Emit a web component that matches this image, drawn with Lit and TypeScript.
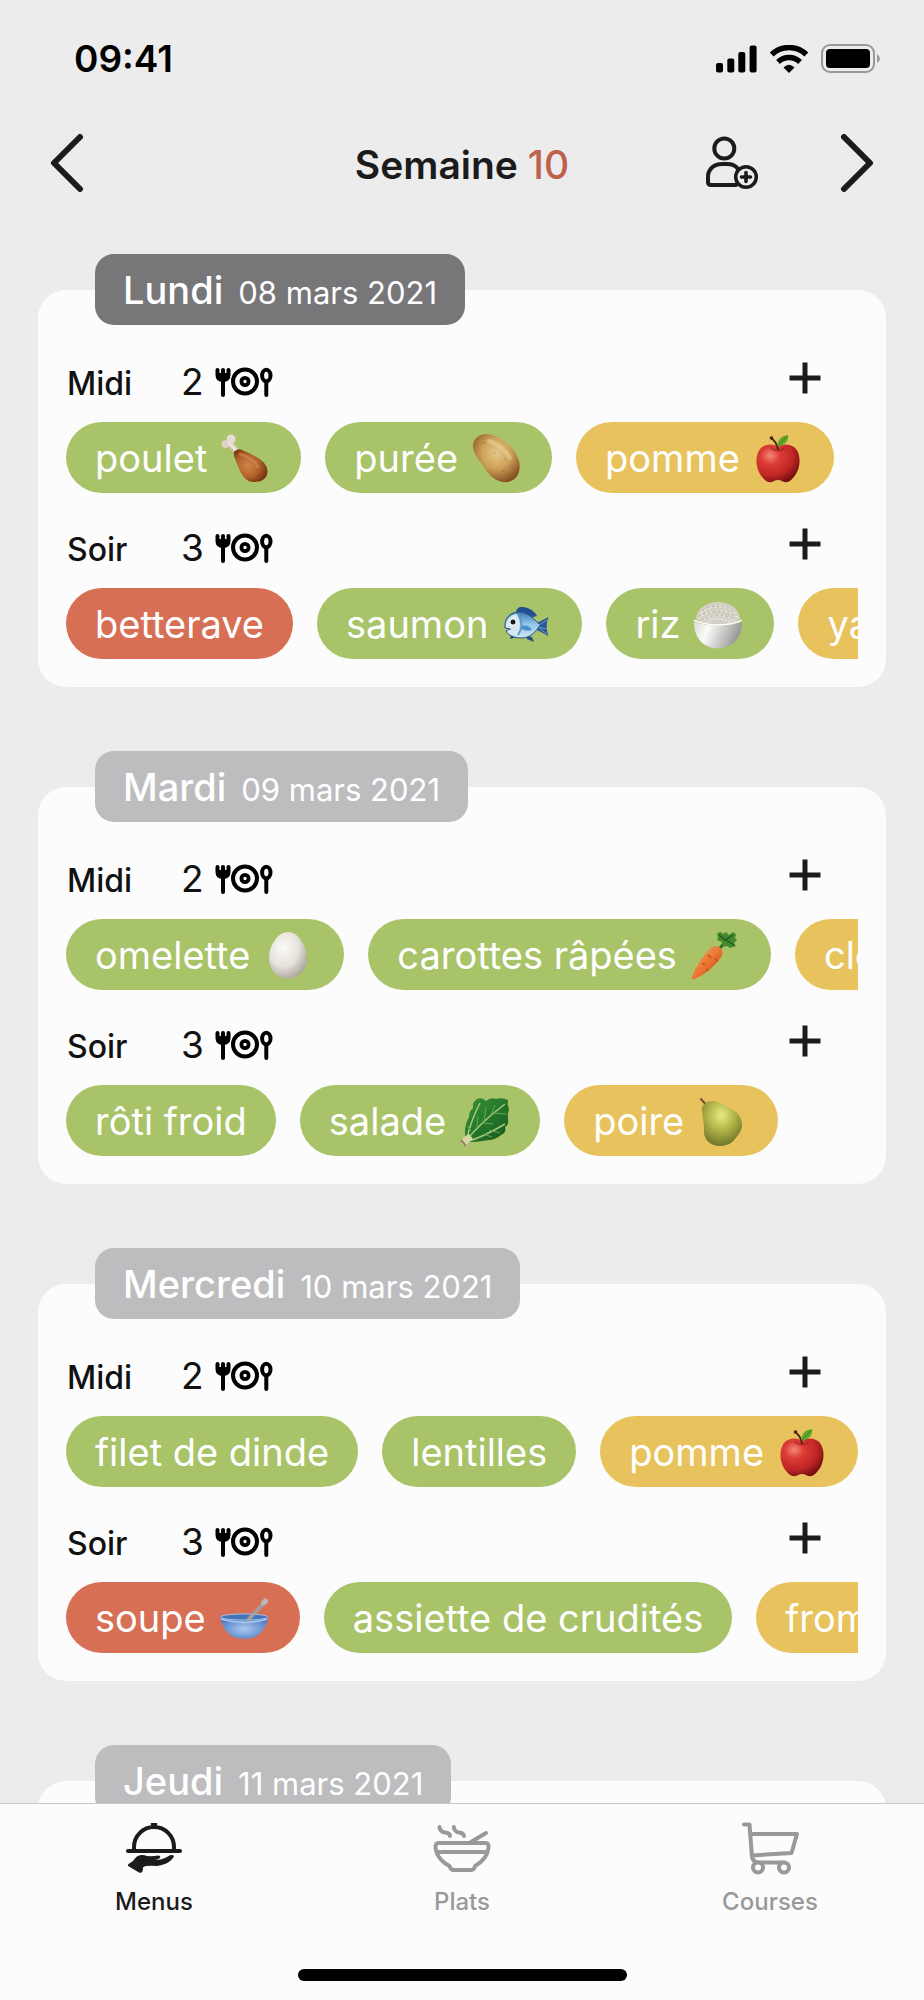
import { LitElement, html, css, svg, nothing, SVGTemplateResult } from "lit";
import { customElement, property } from "lit/decorators.js";
import { classMap } from "lit/directives/class-map.js";

type Kind = "starter" | "main" | "dessert";
interface Dish { name: string; kind: Kind; art?: string; }
interface Meal { label: string; guests: number; dishes: Dish[]; }
interface Day { name: string; date: string; today?: boolean; meals: Meal[]; }

const DAYS: Day[] = [
  {
    name: "Lundi", date: "08 mars 2021", today: true,
    meals: [
      { label: "Midi", guests: 2, dishes: [
        { name: "poulet", kind: "main", art: "drumstick" },
        { name: "purée", kind: "main", art: "potato" },
        { name: "pomme", kind: "dessert", art: "apple" },
      ] },
      { label: "Soir", guests: 3, dishes: [
        { name: "betterave", kind: "starter" },
        { name: "saumon", kind: "main", art: "fish" },
        { name: "riz", kind: "main", art: "rice" },
        { name: "yaourt", kind: "dessert" },
      ] },
    ],
  },
  {
    name: "Mardi", date: "09 mars 2021",
    meals: [
      { label: "Midi", guests: 2, dishes: [
        { name: "omelette", kind: "main", art: "egg" },
        { name: "carottes râpées", kind: "main", art: "carrot" },
        { name: "clémentine", kind: "dessert" },
      ] },
      { label: "Soir", guests: 3, dishes: [
        { name: "rôti froid", kind: "main" },
        { name: "salade", kind: "main", art: "lettuce" },
        { name: "poire", kind: "dessert", art: "pear" },
      ] },
    ],
  },
  {
    name: "Mercredi", date: "10 mars 2021",
    meals: [
      { label: "Midi", guests: 2, dishes: [
        { name: "filet de dinde", kind: "main" },
        { name: "lentilles", kind: "main" },
        { name: "pomme", kind: "dessert", art: "apple" },
      ] },
      { label: "Soir", guests: 3, dishes: [
        { name: "soupe", kind: "starter", art: "soup" },
        { name: "assiette de crudités", kind: "main" },
        { name: "fromage", kind: "dessert" },
      ] },
    ],
  },
  {
    name: "Jeudi", date: "11 mars 2021",
    meals: [],
  },
];

// Food drawings share a 54 x 48 box.
const ART: Record<string, SVGTemplateResult> = {
  drumstick: svg`
    <defs><radialGradient id="dr" cx=".42" cy=".5" r=".62">
      <stop offset="0" stop-color="#d08647"/><stop offset=".55" stop-color="#b0622c"/><stop offset="1" stop-color="#703010"/>
    </radialGradient></defs>
    <path d="M12 10 21 19" stroke="#d5cabd" stroke-width="6"/>
    <circle cx="7.500" cy="10" r="4" fill="#dcd2c6"/><circle cx="13" cy="5" r="4.500" fill="#e6ddd2"/>
    <path d="M10 8 19 17" stroke="#ede6dc" stroke-width="2.500"/>
    <path d="M16 18Q19 14 24 16C33 20 49 26 49.500 37C49.500 45 43 48 36 48C27 48 23 40 20 32C18 26 15 22 16 18Z" fill="url(#dr)"/>
    <path d="M22 20C30 23 38 28 40 33" stroke="#dc9a5e" stroke-width="2.500" stroke-linecap="round" fill="none" opacity=".5"/>`,
  potato: svg`
    <defs><radialGradient id="po" cx=".5" cy=".4" r=".62">
      <stop offset="0" stop-color="#e6c888"/><stop offset=".5" stop-color="#cfa35a"/><stop offset="1" stop-color="#855021"/>
    </radialGradient></defs>
    <path d="M4 12C4 5 10 0 18 0C30 1 44 12 49 24C53 34 50 46 39 48C30 49 22 44 17 36C12 28 4 20 4 12Z" fill="url(#po)"/>
    <path d="M20 7C28 9 37 17 41 24" stroke="#f4e0ac" stroke-width="4" stroke-linecap="round" fill="none" opacity=".4"/>
    <g fill="#8d5c28" opacity=".45"><circle cx="15" cy="9" r="1"/><circle cx="26" cy="19" r=".8"/><circle cx="22" cy="30" r=".8"/><circle cx="34" cy="37" r="1"/><circle cx="43" cy="32" r=".8"/><circle cx="36" cy="25" r=".8"/></g>`,
  apple: svg`
    <defs><radialGradient id="ap" cx=".32" cy=".3" r=".75">
      <stop offset="0" stop-color="#f48a78"/><stop offset=".3" stop-color="#dc3c35"/><stop offset=".7" stop-color="#c02627"/><stop offset="1" stop-color="#79100f"/>
    </radialGradient></defs>
    <path d="M27 13C32 9 41 10 45 15C51 23 49 37 42 44C38 49 34 49 31 47Q27 45 23 47C20 49 16 49 12 44C5 37 3 23 9 15C13 10 22 9 27 13Z" fill="url(#ap)"/>
    <path d="M20 14Q27 19 34 14" stroke="#8e1b18" stroke-width="2" fill="none" opacity=".55"/>
    <path d="M20 4Q25 7 27 15" stroke="#4a2415" stroke-width="2" stroke-linecap="round" fill="none"/><circle cx="20.500" cy="4" r="1.800" fill="#4a2415"/>
    <path d="M26.500 12C26 6 30 2 37 1C38 7 34 12 26.500 12Z" fill="#63a82d"/><path d="M27 12Q31 8 36 2" stroke="#3e7c1c" fill="none"/>`,
  fish: svg`
    <defs><linearGradient id="fi" x1="0" y1="0" x2="0" y2="1">
      <stop offset="0" stop-color="#3d78b4"/><stop offset=".45" stop-color="#8ec4ea"/><stop offset="1" stop-color="#d6e8f3"/>
    </linearGradient></defs>
    <path d="M17 12C18 8 20 7 22 7C28 7 34 9 38 16L30 18Z" fill="#244f8f"/>
    <path d="M27 36 33 37 35 42 28 39ZM12 35 11 39 18 37Z" fill="#274d87"/>
    <path d="M38 23 49.500 17C47 24 47 29 49.500 36L38 30Z" fill="#2a5595"/>
    <path d="M6 25C6 17 13 11 22 12C30 13 36 20 41 25C37 32 31 38 22 38C15 38 9 35 7 31L12 29 6 28Z" fill="url(#fi)" stroke="#275390"/>
    <path d="M7 24C8 18 13 14 18 14Q24 24 18 35Q11 36 8 31L13 29 7 27Z" fill="#d7e8f3"/>
    <path d="M19 14Q26 25 19 35" stroke="#5799d0" stroke-width="1.800" fill="none"/>
    <path d="M23 26Q30 24 33 30Q27 32 23 29" fill="#4d90cb"/>
    <path d="M40 25 48 20M40 27 47 29M40 28 48 34" stroke="#6c9ccc" fill="none"/>
    <circle cx="14" cy="22" r="3.400" fill="#fff"/><circle cx="14" cy="22" r="2.500" fill="#171717"/>`,
  rice: svg`
    <defs><linearGradient id="bo" x1="0" y1="0" x2="1" y2=".25">
      <stop offset="0" stop-color="#d8d8d6"/><stop offset=".35" stop-color="#fbfbfa"/><stop offset="1" stop-color="#989896"/>
    </linearGradient></defs>
    <path d="M5 20C5 9 15 2 27 2S49 9 49 20L40 26H14Z" fill="#d4cfc5"/>
    <g stroke="#e9e5dd" stroke-width="1.600" stroke-linecap="round" stroke-dasharray="1.500 2.500" fill="none"><path d="M10 13Q27 0 44 13M8 18Q27 3 47 18M10 22Q27 9 45 22M15 23Q27 14 40 23"/></g>
    <g stroke="#b0a99d" stroke-linecap="round" stroke-dasharray="1 4" fill="none"><path d="M12 10Q27 2 42 11M8 16Q27 6 46 17M11 20Q27 11 44 20"/></g>
    <path d="M3 19Q3 22 6 23Q27 29 48 23Q51 22 51 19C52 33 46 42 38 46Q27 51 16 46C8 42 2 33 3 19Z" fill="url(#bo)"/>
    <path d="M3 20Q8 24 27 25Q46 24 51 20" stroke="#fff" stroke-width="1.500" fill="none"/>`,
  egg: svg`
    <defs><radialGradient id="eg" cx=".38" cy=".34" r=".72">
      <stop offset="0" stop-color="#fbfaf7"/><stop offset=".55" stop-color="#e6e3dc"/><stop offset="1" stop-color="#a9a398"/>
    </radialGradient></defs>
    <path d="M27 1C38 1 46 16 46 27C46 39 38 47.500 27 47.500S8 39 8 27C8 16 16 1 27 1Z" fill="url(#eg)"/>`,
  carrot: svg`
    <defs><linearGradient id="ca" x1="0" y1="0" x2="1" y2="1">
      <stop offset=".2" stop-color="#f39a50"/><stop offset=".55" stop-color="#e9702f"/><stop offset=".85" stop-color="#c24b17"/>
    </linearGradient></defs>
    <path d="M32 17 38 10" stroke="#386c28" stroke-width="3"/>
    <path d="M29 2 33 1 35 3 38 1 41 4 45 1 48 3 47 7 49 9 46 12 48 15 42 17 39 15 35 16 34 11 29 9 30 6Z" fill="#438a30"/>
    <path d="M31 4 37 9 45 4M38 9 46 14" stroke="#1f5520" stroke-width="1.300" fill="none"/>
    <path d="M22 18C25 14 30 14 33 18C36 22 34 25 31 29C23 39 14 45 5 48.500Q3 48 4 46C8 35 14 26 22 18Z" fill="url(#ca)"/>
    <path d="M20 24 23 27M27 28 30 30M14 32 17 34M18 38 20 40" stroke="#bb4818" stroke-width="1.200"/>`,
  lettuce: svg`
    <defs><linearGradient id="le" x1="0" y1="0" x2="1" y2="1">
      <stop offset="0" stop-color="#3b9138"/><stop offset=".5" stop-color="#25772b"/><stop offset="1" stop-color="#14551f"/>
    </linearGradient></defs>
    <path d="M9 43C7 35 8 27 12 20Q12 14 16 11Q15 5 20 2Q25 0 29 4Q34 0 39 2Q45 0 51 3Q50 8 52 12Q50 17 51 22Q52 28 48 30Q50 35 44 38Q38 43 32 43Q22 45 14 45Z" fill="url(#le)"/>
    <path d="M8 45C15 36 28 22 48 7M9 44C12 32 16 19 23 6M11 44C24 41 36 34 48 27" stroke="#a5cb7a" stroke-width="1.500" fill="none"/>
    <path d="M14 34 10 28M20 31 21 19M27 25 29 10M34 18 38 8M26 37 35 40M32 33 43 36M26 26 36 27M36 16 49 17" stroke="#6aa650" fill="none"/>
    <path d="M4 43Q8 39 12 37L16 42Q12 44 9 49Q4 48 4 43Z" fill="#d8d8a5"/><path d="M4 43 9 49" stroke="#9a8062" stroke-width="2"/>`,
  pear: svg`
    <defs><radialGradient id="pe" cx=".48" cy=".32" r=".68">
      <stop offset="0" stop-color="#e6ea83"/><stop offset=".45" stop-color="#b6ba4b"/><stop offset="1" stop-color="#70752a"/>
    </radialGradient></defs>
    <path d="M6 2Q8 5 12 8" stroke="#704326" stroke-width="2" stroke-linecap="round" fill="none"/>
    <path d="M7 14C6 8 11 4 18 4C25 4 28 8 34 11C42 14 47 20 47 28C47 34 43 38 40 42C36 47 31 49 25 49C16 49 9 43 9 35C9 27 8 21 7 14Z" fill="url(#pe)"/>`,
  soup: svg`
    <defs><radialGradient id="so" cx=".5" cy=".55" r=".55">
      <stop offset="0" stop-color="#abc9f0"/><stop offset="1" stop-color="#527fc6"/>
    </radialGradient></defs>
    <path d="M3.500 23C4 33 12 42 19 44Q27 45.500 35 44C43 42 50 33 51 23Z" fill="url(#so)"/>
    <ellipse cx="27.300" cy="23" rx="23.700" ry="3" fill="#4674b8" stroke="#9fc0ea"/>
    <path d="M31 26 47 9" stroke="#a3a09f" stroke-width="3.500" stroke-linecap="round"/><ellipse cx="47.500" cy="8" rx="2.800" ry="4" transform="rotate(42 47.500 8)" fill="#bbb7b5"/>
    <path d="M4 25Q27 32 50 25" stroke="#abc9f0" stroke-width="1.500" fill="none"/>`,
};

@customElement("meal-row")
export class MealRow extends LitElement {
  @property({ attribute: false }) meal!: Meal;

  static styles = css`
    :host { display: block; }
    .head { display: flex; align-items: baseline; height: 50px; line-height: 52px; margin-bottom: 16px; }
    .label { width: 115px; padding-left: 1px; box-sizing: border-box; margin: 0; font-size: 32px; font-weight: 500; color: #111; }
    .guests { display: flex; align-items: center; gap: 11px; font-size: 37px; color: #111; }
    .guests svg { display: block; width: 58px; height: 30px; }
    .add { display: grid; place-items: center; width: 48px; height: 44px; align-self: flex-start; margin: 0 29px 0 auto; padding: 0; border: 0; background: none; cursor: pointer; }
    .dishes { display: flex; gap: 24px; margin: 0; padding: 0; list-style: none; overflow: hidden; }
    .dish { display: flex; align-items: center; gap: 11px; height: 71px; padding: 0 29px; border: 0; border-radius: 36px; font: inherit; font-size: 38px; color: #fff; white-space: nowrap; cursor: pointer; }
    .dish svg { flex: none; width: 54px; height: 48px; overflow: visible; }
    .starter { background: #d76f55; }
    .main { background: #a9c368; }
    .dessert { background: #e8c35d; }
  `;

  render() {
    const { label, guests, dishes } = this.meal;
    return html`
      <div class="head">
        <h3 class="label">${label}</h3>
        <span class="guests">${guests}
          <svg viewBox="0 0 58 30" fill="none" stroke="#000" stroke-width="4" stroke-linecap="round" aria-hidden="true">
            <path d="M2.500 3V8Q2.500 13 8 13T13.500 8V3M8 3V28"/>
            <path d="M3 6H13V9Q12 12 8 12T3 9Z" fill="#000" stroke="none"/>
            <circle cx="30" cy="14.500" r="12"/><circle cx="30" cy="14.500" r="3.600" stroke-width="3.800"/>
            <ellipse cx="51.300" cy="8.500" rx="4.200" ry="5.800"/><path d="M51.300 15V28"/>
          </svg>
        </span>
        <button class="add" aria-label="Ajouter un plat">
          <svg width="32" height="32" viewBox="0 0 32 32" stroke="#1b1b1c" stroke-width="5"><path d="M16 .5V31.500M.5 16H31.500"/></svg>
        </button>
      </div>
      <ul class="dishes">
        ${dishes.map((d) => html`<li>
          <button class=${classMap({ dish: true, [d.kind]: true })}>
            <span>${d.name}</span>${d.art ? html`<svg viewBox="0 0 54 48" aria-hidden="true">${ART[d.art]}</svg>` : nothing}
          </button></li>`)}
      </ul>`;
  }
}

@customElement("day-card")
export class DayCard extends LitElement {
  @property({ attribute: false }) day!: Day;

  static styles = css`
    :host { display: block; }
    .badge { display: flex; align-items: baseline; gap: 15px; width: fit-content; height: 71px; line-height: 73px; box-sizing: border-box; position: relative; margin: 0 0 0 57px; padding: 0 28px; border-radius: 19px; background: #bdbdbf; color: #fff; font-size: 38px; font-weight: 500; }
    .today { background: #777779; }
    .date { font-size: 31px; font-weight: 400; }
    .card { display: grid; grid-template-columns: minmax(0, 1fr); gap: 29px; margin-top: -35px; padding: 66px 28px 28px; border-radius: 28px; background: #fcfcfc; }
  `;

  render() {
    const { name, date, today, meals } = this.day;
    return html`
      <h2 class=${classMap({ badge: true, today: !!today })}>${name}<span class="date">${date}</span></h2>
      <div class="card">${meals.map((m) => html`<meal-row .meal=${m}></meal-row>`)}</div>`;
  }
}

@customElement("app-root")
export class AppRoot extends LitElement {
  static styles = css`
    :host { display: flex; flex-direction: column; height: 100vh; background: #ececec; color: #1b1b1c; font-family: Inter, "Liberation Sans", sans-serif; }
    .status { display: flex; flex: none; align-items: center; justify-content: space-between; height: 117px; padding: 0 43px 0 74px; color: #000; font-size: 37px; font-weight: 600; }
    .signals { display: flex; align-items: center; gap: 13px; }
    svg { display: block; }
    .nav { display: grid; flex: none; grid-template-columns: 1fr auto 1fr; align-items: center; height: 92px; padding: 0 50px; }
    .title { margin: 0; padding-top: 2px; font-size: 39px; font-weight: 600; }
    .week { color: #bf624c; font-weight: 500; }
    .icon { padding: 0; border: 0; background: none; color: inherit; cursor: pointer; }
    .prev { justify-self: start; }
    .actions { display: flex; justify-self: end; align-items: center; gap: 81px; }
    .days { display: flex; flex: 1; flex-direction: column; gap: 64px; min-height: 0; padding: 45px 38px 0; overflow: hidden; }
    .days > * { flex: none; }
    .tabs { flex: none; border-top: 1px solid #c8c8c8; background: #fcfcfc; }
    .links { display: grid; grid-template-columns: repeat(3, 1fr); }
    .tab { display: flex; flex-direction: column; align-items: center; gap: 12px; padding-top: 18px; color: #999; font-size: 24px; line-height: 28px; font-weight: 500; text-decoration: none; }
    .current { color: #1b1b1c; }
    .home { width: 329px; height: 12px; margin: 53px auto 19px; border-radius: 6px; background: #000; }
  `;

  render() {
    return html`
      <header>
        <div class="status">
          <span>09:41</span>
          <span class="signals">
            <svg width="41" height="28" viewBox="0 0 41 28"><rect y="18" width="7" height="9.500" rx="2"/><rect x="11.300" y="13.500" width="7" height="14" rx="2"/><rect x="22.300" y="7" width="7" height="20.500" rx="2"/><rect x="33.600" y=".5" width="7" height="27" rx="2"/></svg>
            <svg width="38" height="28" viewBox="0 0 38 28"><path d="M1.700 9.500A25 25 0 0 1 36.300 9.500M8 17A16 16 0 0 1 30 17" fill="none" stroke="#000" stroke-width="5.500"/><path d="M13.500 22.500Q19 17 24.500 22.500L19 28Z"/></svg>
            <svg width="60" height="29" viewBox="0 0 60 29"><rect x="1" y="1" width="52" height="27" rx="8" fill="none" stroke="#999" stroke-width="2"/><rect x="5" y="5" width="44" height="19" rx="4"/><path d="M56 10Q62 14.500 56 19Z" fill="#999"/></svg>
          </span>
        </div>
        <div class="nav">
          <button class="icon prev" aria-label="Semaine précédente">
            <svg width="34" height="58" viewBox="0 0 34 58" fill="none" stroke="currentColor" stroke-width="6" stroke-linecap="round" stroke-linejoin="round"><path d="M30 3 4 29 30 55"/></svg>
          </button>
          <h1 class="title">Semaine <span class="week">10</span></h1>
          <div class="actions">
            <button class="icon" aria-label="Inviter">
              <svg width="53" height="54" viewBox="0 0 53 54" fill="none" stroke="currentColor" stroke-width="4" stroke-linecap="round"><circle cx="18.300" cy="12.500" r="10"/><path d="M30 49H5Q2 49 2 46V41C2 33 8 28 16 28H21C26 28 30 30 32 33"/><circle cx="40" cy="41" r="10.300" stroke-width="3.500"/><path d="M40 36.500V45.500M35.500 41H44.500" stroke-width="3.600"/></svg>
            </button>
            <button class="icon" aria-label="Semaine suivante">
              <svg width="34" height="58" viewBox="0 0 34 58" fill="none" stroke="currentColor" stroke-width="6" stroke-linecap="round" stroke-linejoin="round"><path d="M4 3 30 29 4 55"/></svg>
            </button>
          </div>
        </div>
      </header>
      <main class="days">${DAYS.map((d) => html`<day-card .day=${d}></day-card>`)}</main>
      <nav class="tabs">
        <div class="links">
          <a class="tab current" href="#menus" aria-current="page">
            <svg width="56" height="54" viewBox="0 0 56 54" fill="currentColor"><path d="M25.500 1H30.500Q32 1 31 3L30 6H26L25 3Q24 1 25.500 1Z"/><path d="M8 27V25A20 20 0 0 1 48 25V27" fill="none" stroke="currentColor" stroke-width="4"/><path d="M2 29H54" stroke="currentColor" stroke-width="4" stroke-linecap="round"/><path d="M2.500 42 7 39Q11 32.500 16 33Q18.500 33 21 34Q27 34.500 32 33.500Q35 33.500 34 36Q32 37.500 29 38Q36 38 41 35Q44 32.500 46.500 33Q49 34 47 36C43 41 38 43 31 44Q25 43.500 20 44Q16 45 17 47Q16.500 52 13 50.500L3 44.500Q1 43.500 2.500 42Z"/></svg>
            Menus
          </a>
          <a class="tab" href="#plats">
            <svg width="58" height="54" viewBox="0 0 58 54" fill="none" stroke="currentColor" stroke-width="4" stroke-linecap="round" stroke-linejoin="round"><path d="M6.500 5Q7 10 12 10.500T17 14M20.800 5Q21.500 10 26 10.500T31 14M38 20 53 11M5.500 21H52.500Q56 21 55.500 25C55 34 48 41 42 44Q41.500 47.500 38.500 48H20Q17.500 47.500 16.500 44C10 41 3 34 2.500 25Q2.500 21 5.500 21ZM4 30H54"/></svg>
            Plats
          </a>
          <a class="tab" href="#courses">
            <svg width="58" height="54" viewBox="0 0 58 54" fill="none" stroke="currentColor" stroke-width="4" stroke-linecap="round" stroke-linejoin="round"><path d="M3 2.500H8.500L11 35Q12 40 17 40.500H43M9 12H56L50.500 31 11 33.500"/><circle cx="17" cy="45.500" r="5" fill="#fcfcfc"/><circle cx="43" cy="45.500" r="5" fill="#fcfcfc"/></svg>
            Courses
          </a>
        </div>
        <div class="home"></div>
      </nav>`;
  }
}
